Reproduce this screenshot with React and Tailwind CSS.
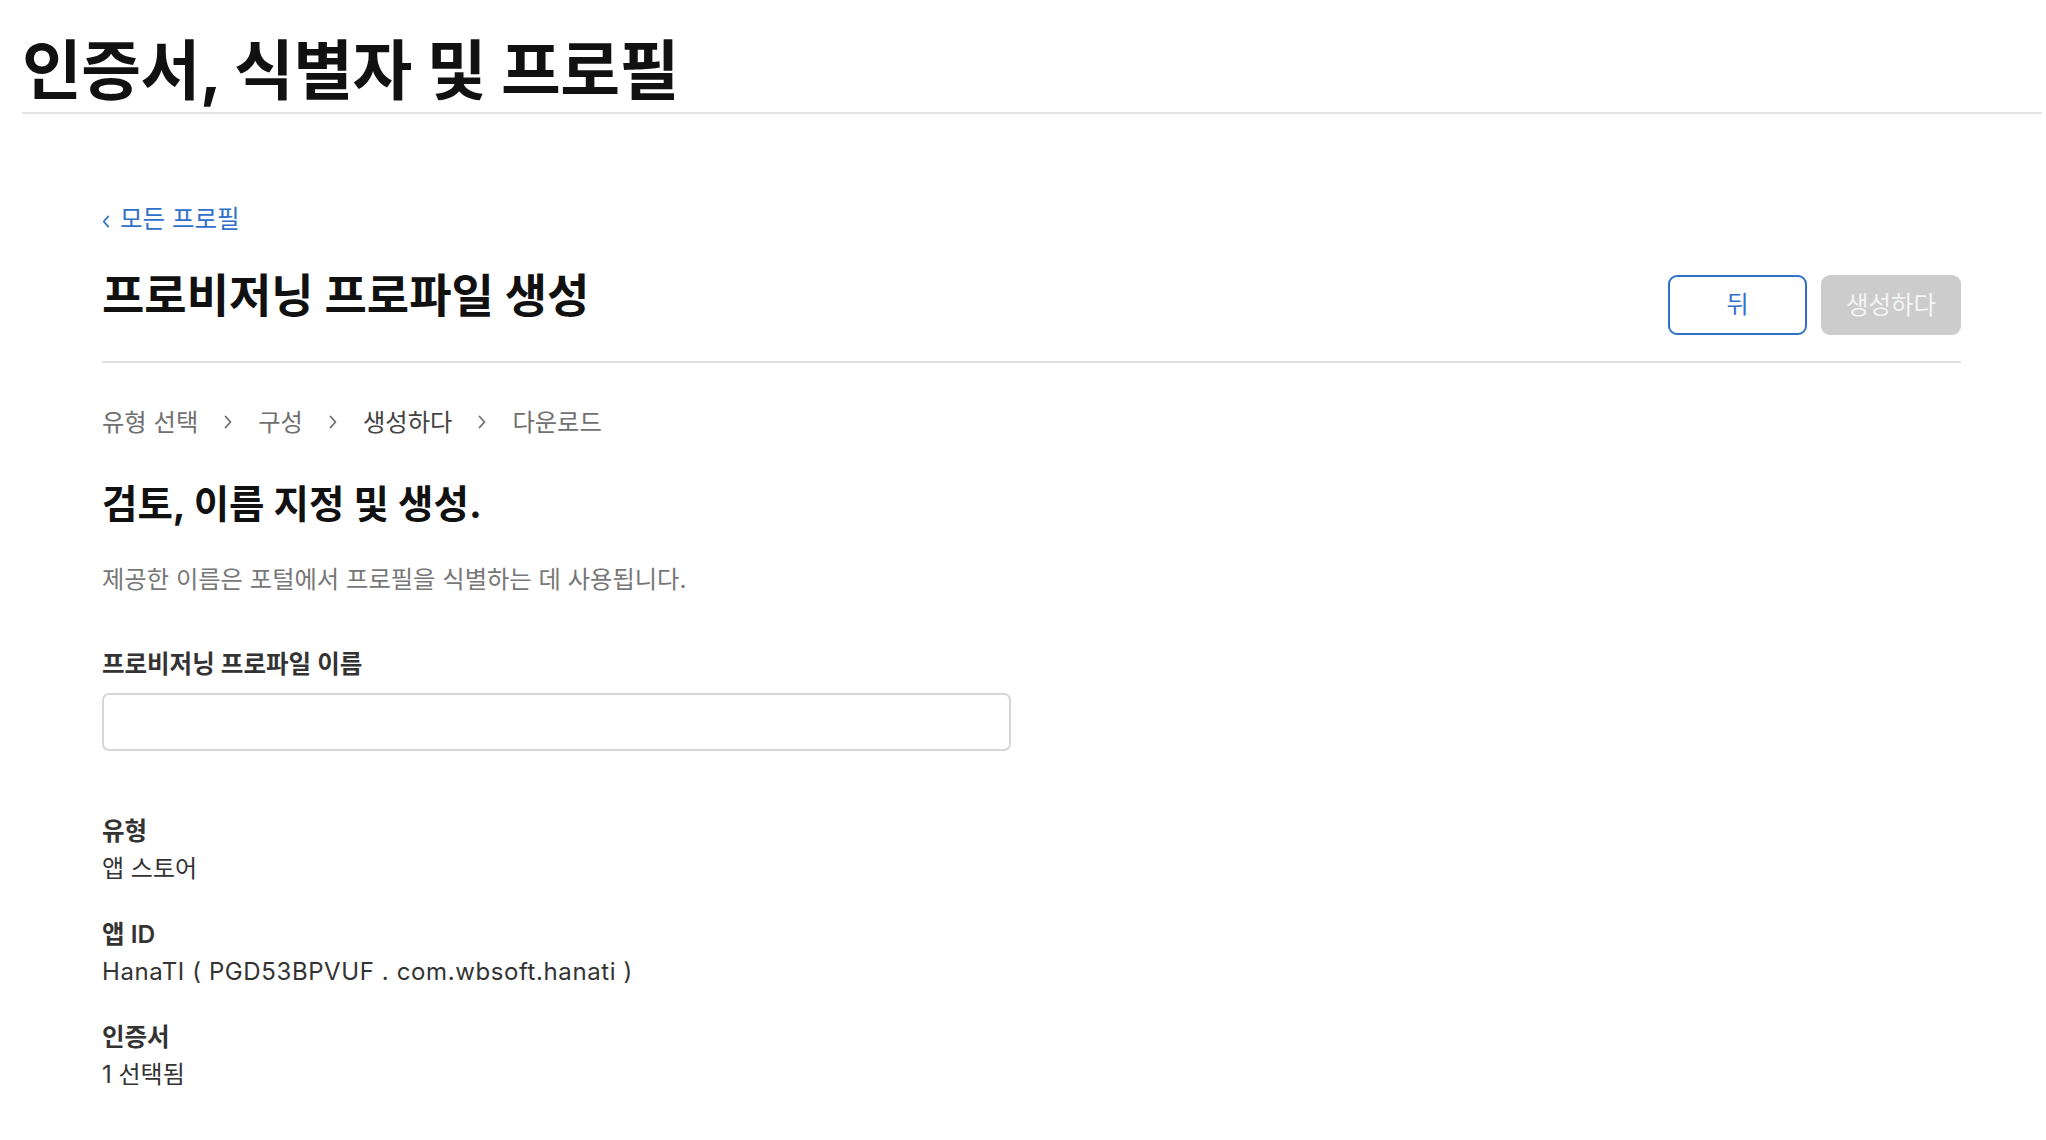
import React from "react";

const font = { fontFamily: 'Inter, "Noto Sans CJK KR", sans-serif' };

function Chevron({ className = "", left = false }) {
  return (
    <svg
      className={className}
      viewBox="0 0 8 14"
      fill="none"
      stroke="currentColor"
      strokeWidth="1.8"
      strokeLinecap="round"
      strokeLinejoin="round"
    >
      {left ? <path d="M6.5 1.5 1.5 7l5 5.5" /> : <path d="M1.5 1.5 6.5 7l-5 5.5" />}
    </svg>
  );
}

const steps = [
  { label: "유형 선택", current: false },
  { label: "구성", current: false },
  { label: "생성하다", current: true },
  { label: "다운로드", current: false },
];

const details = [
  { label: "유형", value: "앱 스토어" },
  { label: "앱 ID", value: "HanaTI ( PGD53BPVUF . com.wbsoft.hanati )", latin: true },
  { label: "인증서", value: "1 선택됨" },
];

export default function App() {
  return (
    <div className="min-h-[1140px] bg-white text-[#1d1d1f]" style={font}>
      {/* page title */}
      <div className="ml-[22px] mr-[4px] border-b-2 border-[#e4e4e4] pt-[31px] pb-[1px]">
        <h1 className="text-[65px] font-bold leading-[80px] tracking-[-0.5px] text-[#111]">
          인증서, 식별자 및 프로필
        </h1>
      </div>

      <div className="ml-[102px] w-[1859px]">
        <a
          href="#"
          className="mt-[89px] flex h-[32px] items-center gap-[10px] text-[24.5px] leading-[32px] text-[#3170c9]"
        >
          <Chevron left className="mt-[4px] h-[13px] w-[8px]" />
          <span>모든 프로필</span>
        </a>

        <div className="mt-[40px] flex h-[60px] items-center justify-between">
          <h2 className="mb-[20px] text-[46px] font-bold leading-[60px] text-[#111]">
            프로비저닝 프로파일 생성
          </h2>
          <div className="flex gap-[14px]">
            <button className="h-[60px] w-[139px] rounded-[9px] border-2 border-[#3170c9] text-[24px] text-[#3170c9]">
              뒤
            </button>
            <button className="h-[60px] w-[140px] rounded-[9px] bg-[#cccccc] text-[24.5px] text-[#f4f4f4]">
              생성하다
            </button>
          </div>
        </div>
        <div className="mt-[26px] border-b-2 border-[#e0e0e0]" />

        {/* steps */}
        <div className="mt-[43px] flex h-[32px] items-center gap-[26px] text-[24.3px] leading-[32px]">
          {steps.map((s, i) => (
            <React.Fragment key={s.label}>
              {i > 0 && <Chevron className="h-[14px] w-[8px] text-[#6e6e6e]" />}
              <span className={s.current ? "text-[#444]" : "text-[#707070]"}>{s.label}</span>
            </React.Fragment>
          ))}
        </div>

        <h3 className="mt-[42px] text-[38.5px] font-bold leading-[48px] text-[#111]">
          검토, 이름 지정 및 생성.
        </h3>
        <p className="mt-[35px] text-[24.3px] leading-[32px] text-[#777]">
          제공한 이름은 포털에서 프로필을 식별하는 데 사용됩니다.
        </p>

        <label className="mt-[54px] block text-[24.5px] font-semibold leading-[30px] text-[#333]">
          프로비저닝 프로파일 이름
        </label>
        <input
          type="text"
          className="mt-[14px] block h-[58px] w-[909px] rounded-[7px] border-2 border-[#d6d6d6] px-4 text-[24px] outline-none"
        />

        <dl className="mt-[64px]">
          {details.map((d, i) => (
            <div key={d.label} className={i > 0 ? "mt-[33px]" : ""}>
              <dt className="text-[24.5px] font-semibold leading-[32px] text-[#333]">{d.label}</dt>
              <dd
                className={`mt-[6px] text-[24px] leading-[32px] text-[#333] ${
                  d.latin ? "tracking-[0.6px]" : ""
                }`}
              >
                {d.value}
              </dd>
            </div>
          ))}
        </dl>
      </div>
    </div>
  );
}
